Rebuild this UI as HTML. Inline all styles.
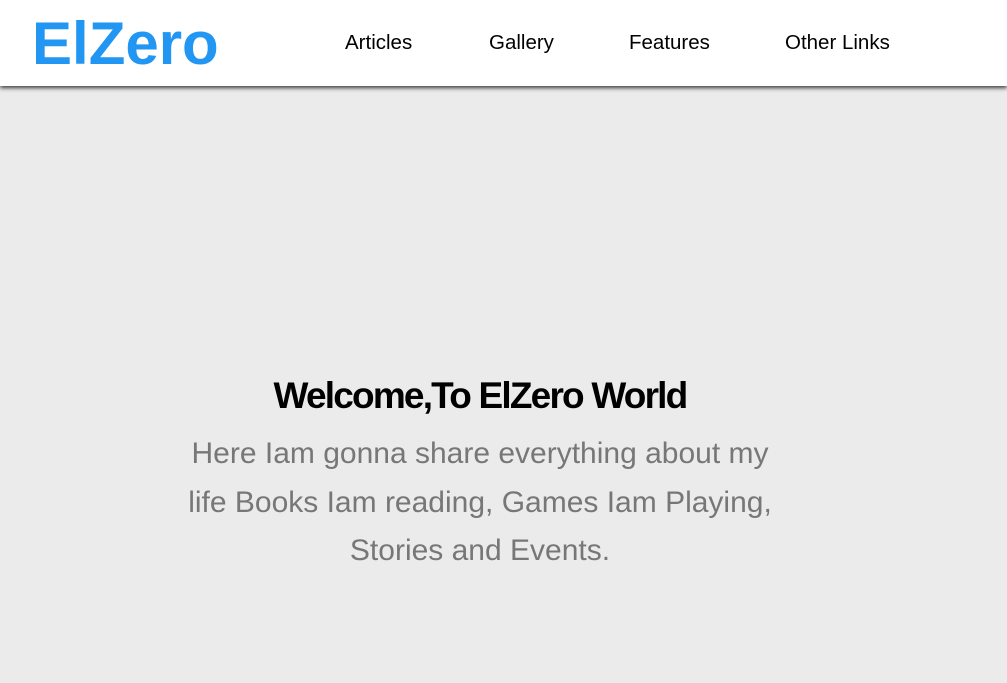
<!DOCTYPE html>
<html><head><style>
body{margin:0;width:1007px;height:683px;background:#ebebeb;font-family:"Liberation Sans",sans-serif;overflow:hidden;position:relative}
.hd{position:absolute;left:0;top:0;width:1007px;height:86px;background:#fff;box-shadow:0 2px 4px rgba(0,0,0,.75)}
.logo{position:absolute;left:32px;top:9px;font-size:60px;font-weight:bold;color:#2196f3;line-height:70px}
.nav{position:absolute;top:31px;font-size:20.5px;color:#000;line-height:24px}
h1{position:absolute;left:0;width:960px;top:374px;margin:0;text-align:center;font-size:37px;letter-spacing:-1.8px;line-height:44px;color:#000}
p{position:absolute;left:0;width:960px;top:430px;margin:0;text-align:center;font-size:30px;line-height:48.5px;color:#777}
</style></head><body>
<div class="hd">
<div class="logo">ElZero</div>
<div class="nav" style="left:345px">Articles</div>
<div class="nav" style="left:489px">Gallery</div>
<div class="nav" style="left:629px">Features</div>
<div class="nav" style="left:785px">Other Links</div>
</div>
<h1>Welcome,To ElZero World</h1>
<p>Here Iam gonna share everything about my<br>life Books Iam reading, Games Iam Playing,<br>Stories and Events.</p>
</body></html>
